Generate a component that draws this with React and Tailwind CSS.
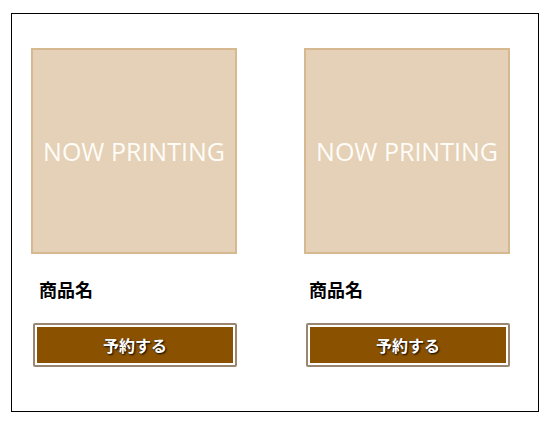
import React from 'react';

const items = [
  { id: 1, name: '商品名', indent: 'pl-[8px]' },
  { id: 2, name: '商品名', indent: 'pl-[5px]' },
];

const ProductCard = ({ item }) => (
  <div className="w-[206px] flex flex-col">
    <div className="w-[206px] h-[206px] bg-[#e4d1b8] border-2 border-[#d6b990] flex items-center justify-center">
      <span className="text-[25px] leading-none text-[#fffcf6] font-['Open_Sans',sans-serif]">
        NOW PRINTING
      </span>
    </div>
    <p className={`mt-[22px] ${item.indent} text-[18px] leading-[27px] font-bold text-black`}>
      {item.name}
    </p>
    <button
      type="button"
      className="mt-[20px] ml-[2px] w-[204px] h-[44px] border-2 border-[#9a8670] rounded-[2px] bg-white p-[2px]"
    >
      <span className="flex w-full h-full items-center justify-center bg-[#8a5200] text-white text-[16px] font-bold [text-shadow:1px_1px_2px_#000]">
        予約する
      </span>
    </button>
  </div>
);

export default function App() {
  return (
    <div className="w-[551px] h-[428px] bg-white pt-[13px] pl-[11px] font-['Noto_Sans_CJK_JP','Noto_Sans',sans-serif]">
      <div className="w-[528px] h-[399px] border border-black pt-[34px] pl-[19px] flex gap-[67px]">
        {items.map(item => (
          <ProductCard key={item.id} item={item} />
        ))}
      </div>
    </div>
  );
}
